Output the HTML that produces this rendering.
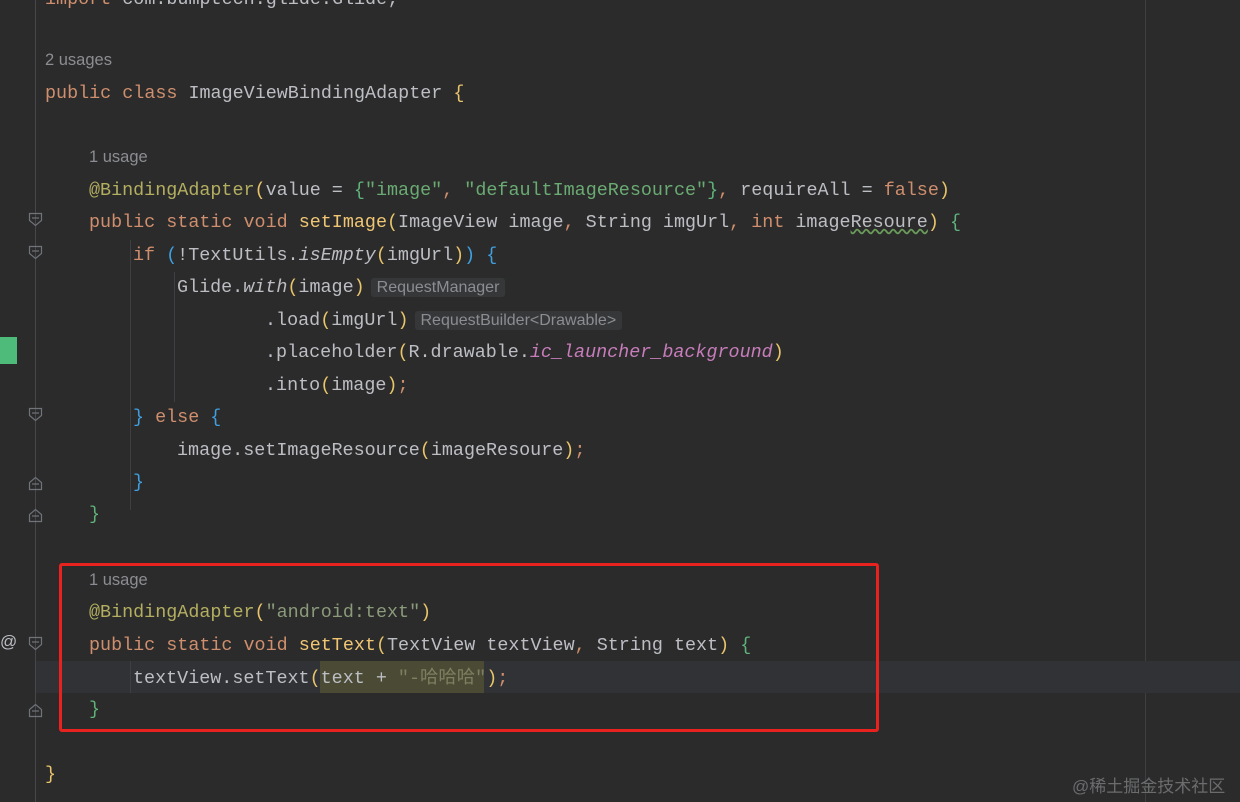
<!DOCTYPE html>
<html><head><meta charset="utf-8"><style>
body{margin:0;width:1240px;height:802px;background:#2b2b2b;overflow:hidden;position:relative;font-family:"Liberation Mono","Noto Sans CJK SC",monospace;}
#ed{position:absolute;left:0;top:0;width:1240px;height:802px;background:#2b2b2b;}
.l{position:absolute;left:0;height:32px;line-height:32px;font-size:18.4px;color:#bcbec4;white-space:pre;}
.u{position:absolute;font-family:"Liberation Sans",sans-serif;font-size:16.5px;color:#8b8d92;line-height:20px;}
.k{color:#cf8e6d}.fn{color:#f0c674}
.an{color:#b3ae60}.s{color:#6aab73}.y{color:#e8c46a}.g{color:#5fb37a}.b{color:#3f9fe0}
.i{font-style:italic}.p{color:#c77dbb;font-style:italic}
.h{font-family:"Liberation Sans",sans-serif;font-size:16px;color:#8b8d92;background:#363739;padding:1px 6px;border-radius:3px;margin-left:6px}
.gl{position:absolute;width:1px;background:#3d3f42}
</style></head><body><div id="ed">
<div style="position:absolute;left:35px;top:0;width:1px;height:802px;background:#45474a"></div>
<div style="position:absolute;left:1145px;top:0;width:1px;height:802px;background:#3d3f42"></div>
<div style="position:absolute;left:36px;top:661px;width:1204px;height:32px;background:#313236"></div>
<div style="position:absolute;left:0;top:337px;width:17px;height:27px;background:#4fbb7b"></div>
<div class="gl" style="left:130px;top:240px;height:270px"></div>
<div class="gl" style="left:174px;top:272px;height:130px"></div>
<div class="gl" style="left:130px;top:661px;height:32px"></div>
<div style="position:absolute;left:320px;top:661px;width:164px;height:32px;background:#4a4a35"></div>

<div class="l" style="top:-16px;left:45px"><span class="k">import</span> com.bumptech.glide.Glide;</div>
<div class="u" style="left:45px;top:50px">2 usages</div>
<div class="l" style="top:78px;left:45px"><span class="k">public class</span> ImageViewBindingAdapter <span class="y">{</span></div>
<div class="u" style="left:89px;top:147px">1 usage</div>
<div class="l" style="top:175px;left:89px"><span class="an">@BindingAdapter</span><span class="y">(</span>value = <span class="g">{</span><span class="s">"image"</span><span class="k">,</span> <span class="s">"defaultImageResource"</span><span class="g">}</span><span class="k">,</span> requireAll = <span class="k">false</span><span class="y">)</span></div>
<div class="l" style="top:207px;left:89px"><span class="k">public static void</span> <span class="fn">setImage</span><span class="y">(</span>ImageView image<span class="k">,</span> String imgUrl<span class="k">,</span> <span class="k">int</span> image<span style="text-decoration:underline wavy #6a9b5a">Resoure</span><span class="y">)</span> <span class="g">{</span></div>
<div class="l" style="top:240px;left:133px"><span class="k">if</span> <span class="b">(</span>!TextUtils.<span class="i">isEmpty</span><span class="y">(</span>imgUrl<span class="y">)</span><span class="b">)</span> <span class="b">{</span></div>
<div class="l" style="top:272px;left:177px">Glide.<span class="i">with</span><span class="y">(</span>image<span class="y">)</span><span class="h">RequestManager</span></div>
<div class="l" style="top:305px;left:265px">.load<span class="y">(</span>imgUrl<span class="y">)</span><span class="h">RequestBuilder&lt;Drawable&gt;</span></div>
<div class="l" style="top:337px;left:265px">.placeholder<span class="y">(</span>R.drawable.<span class="p">ic_launcher_background</span><span class="y">)</span></div>
<div class="l" style="top:370px;left:265px">.into<span class="y">(</span>image<span class="y">)</span><span class="k">;</span></div>
<div class="l" style="top:402px;left:133px"><span class="b">}</span> <span class="k">else</span> <span class="b">{</span></div>
<div class="l" style="top:435px;left:177px">image.setImageResource<span class="y">(</span>imageResoure<span class="y">)</span><span class="k">;</span></div>
<div class="l" style="top:467px;left:133px"><span class="b">}</span></div>
<div class="l" style="top:499px;left:89px"><span class="g">}</span></div>
<div class="u" style="left:89px;top:570px">1 usage</div>
<div class="l" style="top:597px;left:89px"><span class="an">@BindingAdapter</span><span class="y">(</span><span style="color:#8a9a7a">"android:text"</span><span class="y">)</span></div>
<div class="l" style="top:630px;left:89px"><span class="k">public static void</span> <span class="fn">setText</span><span class="y">(</span>TextView textView<span class="k">,</span> String text<span class="y">)</span> <span class="g">{</span></div>
<div class="l" style="top:663px;left:133px">textView.setText<span class="y">(</span>text + <span style="color:#7d7f60">"-哈哈哈"</span><span class="y">)</span><span class="k">;</span></div>
<div class="l" style="top:694px;left:89px"><span class="g">}</span></div>
<div class="l" style="top:759px;left:45px"><span class="y">}</span></div>

<div style="position:absolute;left:59px;top:563px;width:814px;height:163px;border:3px solid #e8231f;border-radius:3px"></div>
<div style="position:absolute;left:0;top:632px;font-size:17px;color:#bcbec4;font-family:'Liberation Sans',sans-serif">@</div>

<svg style="position:absolute;left:0;top:0" width="45" height="802">
<g fill="none" stroke="#6f737a" stroke-width="1.2">
<path d="M29.5 213.5h12v7l-6 5l-6-5z"/><path d="M32 218h7"/>
<path d="M29.5 246.5h12v7l-6 5l-6-5z"/><path d="M32 251h7"/>
<path d="M29.5 408.5h12v7l-6 5l-6-5z"/><path d="M32 413h7"/>
<path d="M29.5 489.5h12v-7l-6-5l-6 5z"/><path d="M32 484h7"/>
<path d="M29.5 521.5h12v-7l-6-5l-6 5z"/><path d="M32 516h7"/>
<path d="M29.5 637.5h12v7l-6 5l-6-5z"/><path d="M32 642h7"/>
<path d="M29.5 716.5h12v-7l-6-5l-6 5z"/><path d="M32 711h7"/>
</g></svg>
<div style="position:absolute;left:1072px;top:772px;font-family:'Liberation Sans','Noto Sans CJK SC',sans-serif;font-size:17px;color:#6b6c6e">@稀土掘金技术社区</div>
</div></body></html>
